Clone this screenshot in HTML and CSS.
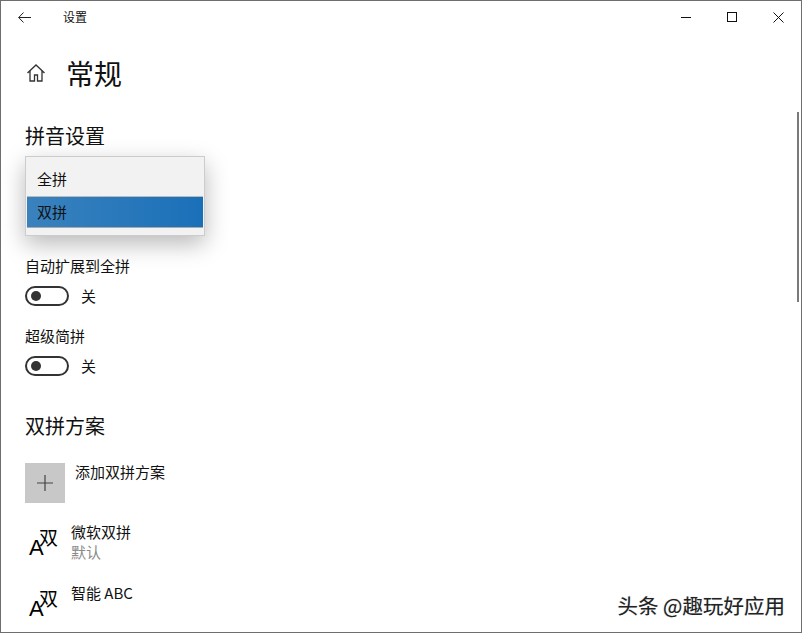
FILE: index.html
```html
<!DOCTYPE html>
<html lang="zh-CN">
<head>
    <meta charset="UTF-8">
    <meta name="viewport" content="width=device-width, initial-scale=1.0">
    <title>设置</title>
    <link rel="stylesheet" href="styles.css">
</head>
<body>
    <div class="window">
        <header class="titlebar">
            <svg class="back-icon" width="13" height="11" viewBox="0 0 13 11">
                <path d="M5.500 .5 .7 5.500l4.800 5M.7 5.500H13" fill="none" stroke="#222" stroke-width="1"/>
            </svg>
            <span class="app-title">设置</span>
            <div class="window-buttons">
                <svg width="11" height="11" viewBox="0 0 11 11"><path d="M0 5.500h10" stroke="#111" fill="none"/></svg>
                <svg width="11" height="11" viewBox="0 0 11 11"><rect x=".5" y=".5" width="9" height="9" stroke="#111" fill="none"/></svg>
                <svg width="11" height="11" viewBox="0 0 11 11"><path d="M.5 .5l10 10M10.500 .5l-10 10" stroke="#111" fill="none"/></svg>
            </div>
        </header>

        <main class="content">
            <div class="page-head">
                <svg class="home-icon" width="20" height="20" viewBox="0 0 20 20">
                    <path d="M1.500 10 10 2l8.500 8M4 8v10h4.500v-6h3v6H16V8" fill="none" stroke="#333" stroke-width="1.300"/>
                </svg>
                <h1>常规</h1>
            </div>

            <h2 class="section-title">拼音设置</h2>
            <div class="combo">
                <ul class="dropdown">
                    <li>全拼</li>
                    <li class="selected">双拼</li>
                </ul>
            </div>

            <div class="setting">
                <div class="setting-label">自动扩展到全拼</div>
                <div class="toggle-row">
                    <span class="toggle"></span>
                    <span>关</span>
                </div>
            </div>
            <div class="setting">
                <div class="setting-label">超级简拼</div>
                <div class="toggle-row">
                    <span class="toggle"></span>
                    <span>关</span>
                </div>
            </div>

            <h2 class="section-title scheme-title">双拼方案</h2>
            <div class="add-row">
                <div class="add-tile">
                    <svg width="16" height="16" viewBox="0 0 16 16"><path d="M8 0v16M0 8h16" stroke="#444" fill="none" stroke-width="1.200"/></svg>
                </div>
                <span class="add-label">添加双拼方案</span>
            </div>

            <div class="scheme">
                <div class="scheme-icon"><span class="icon-a">A</span><span class="icon-han">双</span></div>
                <div>
                    <div class="scheme-name">微软双拼</div>
                    <div class="scheme-note">默认</div>
                </div>
            </div>
            <div class="scheme scheme-last">
                <div class="scheme-icon"><span class="icon-a">A</span><span class="icon-han">双</span></div>
                <div>
                    <div class="scheme-name">智能 ABC</div>
                </div>
            </div>
        </main>

        <div class="scrollbar"></div>
        <div class="watermark">头条 @趣玩好应用</div>
    </div>
</body>
</html>
```

FILE: styles.css
```css
* {
    box-sizing: border-box;
}
html, body {
    margin: 0;
    height: 100%;
    overflow: hidden;
}
body {
    font-family: "Noto Sans CJK SC", "Liberation Sans", sans-serif;
    font-size: 15px;
    line-height: 20px;
    color: #111;
    background: #fff;
}
.window {
    position: relative;
    height: 633px;
    border: 1px solid #6e6e6e;
    overflow: hidden;
}
.titlebar {
    display: flex;
    align-items: center;
    height: 32px;
    padding-left: 17px;
}
.app-title {
    margin-left: 32px;
    font-size: 12px;
}
.window-buttons {
    margin-left: auto;
    display: flex;
    gap: 35px;
    padding-right: 17px;
}
.content {
    padding-left: 24px;
}
.page-head {
    display: flex;
    align-items: center;
    margin-top: 20px;
    height: 40px;
}
.home-icon {
    margin-left: 1px;
}
h1 {
    margin: 0 0 0 20px;
    font-size: 28px;
    font-weight: 400;
    line-height: 40px;
}
.section-title {
    margin: 0;
    font-size: 20px;
    font-weight: 400;
    line-height: 28px;
}
.page-head + .section-title {
    margin-top: 29px;
}
.combo {
    position: relative;
    height: 101px;
}
.dropdown {
    position: absolute;
    left: 0;
    top: 6px;
    width: 180px;
    height: 80px;
    margin: 0;
    padding: 8px 1px;
    list-style: none;
    background: #f2f2f2;
    border: 1px solid #ccc;
    box-shadow: 0 8px 22px rgba(0, 0, 0, 0.28);
}
.dropdown li {
    height: 32px;
    padding-left: 10px;
    line-height: 28px;
}
.dropdown .selected {
    margin-top: -1px;
    line-height: 29px;
    border-top: 1px solid #bbb;
    border-bottom: 1px solid #aaa;
    background: linear-gradient(90deg, #3a82be, #1a70b8);
}
.setting {
    height: 70px;
}
.setting-label {
    padding-top: 5px;
}
.toggle-row {
    display: flex;
    align-items: center;
    gap: 12px;
    margin-top: 10px;
}
.toggle {
    position: relative;
    width: 44px;
    height: 20px;
    border: 2px solid #333;
    border-radius: 10px;
}
.toggle::after {
    content: "";
    position: absolute;
    left: 4px;
    top: 3px;
    width: 10px;
    height: 10px;
    border-radius: 50%;
    background: #333;
}
.scheme-title {
    margin-top: 21px;
}
.add-row {
    display: flex;
    gap: 10px;
    margin-top: 23px;
}
.add-tile {
    display: flex;
    align-items: center;
    justify-content: center;
    width: 40px;
    height: 40px;
    background: #c8c8c8;
}
.add-label {
    margin-top: -1px;
}
.scheme {
    display: flex;
    gap: 13px;
    margin-top: 19px;
    height: 42px;
}
.scheme-icon {
    position: relative;
    width: 33px;
    height: 36px;
    margin-top: 2px;
}
.icon-a {
    position: absolute;
    left: 4px;
    top: 16px;
    font-family: "Liberation Sans", sans-serif;
    font-size: 22px;
    line-height: 16px;
    color: #000;
}
.icon-han {
    position: absolute;
    left: 14px;
    top: 3px;
    font-size: 19px;
    line-height: 19px;
    color: #000;
}
.scheme-name {
    font-size: 15px;
    line-height: 20px;
}
.scheme-note {
    font-size: 15px;
    line-height: 20px;
    color: #8a8a8a;
}
.scrollbar {
    position: absolute;
    right: 2px;
    top: 111px;
    width: 2px;
    height: 190px;
    background: #7a7a7a;
}
.watermark {
    position: absolute;
    right: 16px;
    bottom: 15px;
    font-size: 20.500px;
    line-height: 24px;
    color: #222;
    text-shadow: 1px 1px 1px #fff, 0 0 1px #888;
}
```
